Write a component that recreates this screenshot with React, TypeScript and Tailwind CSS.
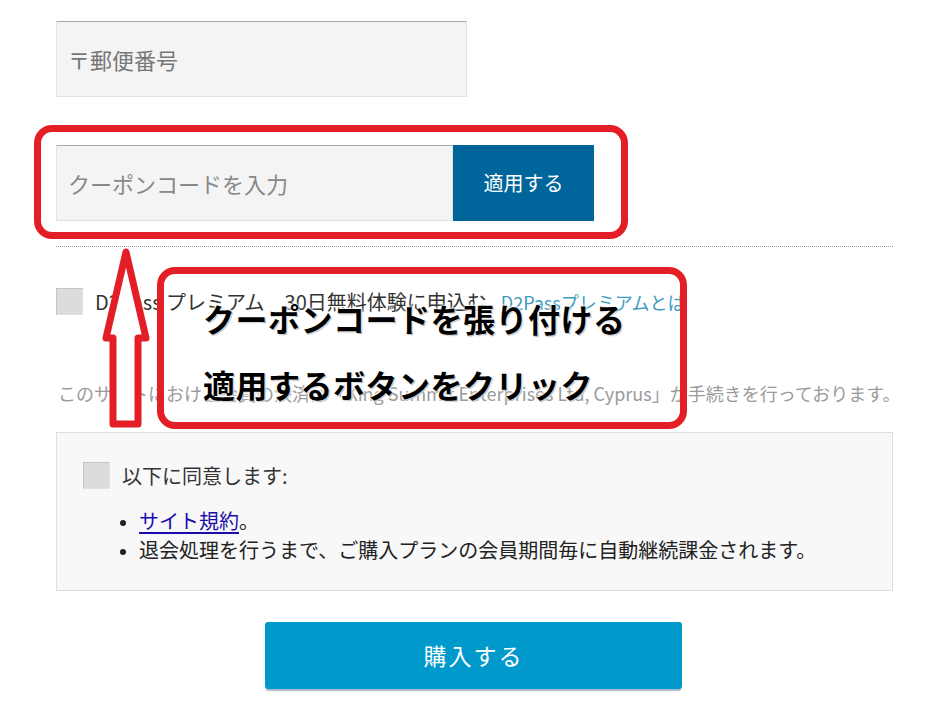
import React from 'react';

const Checkbox: React.FC = () => (
  <span className="inline-block w-[27px] h-[27px] shrink-0 bg-[#dcdcdc] border border-[#c4c4c4] border-r-[#e2e2e2] border-b-[#e2e2e2]" />
);

export default function App() {
  return (
    <div className="relative w-[946px] h-[714px] overflow-hidden bg-white font-['Noto_Sans_CJK_JP',sans-serif]">
      {/* Form */}
      <div className="ml-[56px] w-[837px] pt-[21px]">
        {/* Zip */}
        <div className="w-[411px] h-[76px] flex items-center px-[11px] bg-[#f4f4f4] border border-[#e2e2e2] border-t-[#a8a8a8]">
          <span className="text-[22px] leading-none text-[#777]">〒郵便番号</span>
        </div>

        {/* Coupon */}
        <div className="mt-[48px] flex h-[76px] w-[538px]">
          <div className="flex-1 flex items-center px-[11px] bg-[#f4f4f4] border border-[#e2e2e2] border-t-[#a8a8a8]">
            <span className="text-[22px] leading-none text-[#888]">クーポンコードを入力</span>
          </div>
          <button className="w-[141px] h-full bg-[#00659a] text-white text-[20px] leading-none">適用する</button>
        </div>

        <div className="mt-[25px] border-t border-dotted border-[#9a9a9a]" />

        {/* Premium trial */}
        <div className="mt-[41px] flex items-center gap-[12px]">
          <Checkbox />
          <span className="text-[20px] leading-none text-[#333] whitespace-nowrap">
            D2Pass プレミアム　30日無料体験に申込む
            <a className="ml-[14px] text-[18px] text-[#3a9cc0]">D2Passプレミアムとは</a>
          </span>
        </div>

        <p className="mt-[66px] ml-[2px] text-[18px] leading-[24px] text-[#9a9a9a] whitespace-nowrap">
          このサイトにおける会員の決済は「King Summit Enterprises Ltd, Cyprus」が手続きを行っております。
        </p>

        {/* Agreement */}
        <div className="mt-[27px] h-[159px] bg-[#f8f8f8] border border-[#dedede] pl-[26px] pt-[29px]">
          <div className="flex items-center gap-[12px]">
            <Checkbox />
            <span className="text-[20px] leading-none text-[#333]">以下に同意します:</span>
          </div>
          <ul className="mt-[17px] pl-[56px] list-disc text-[20px] leading-[29px] text-[#222] marker:text-[16px]">
            <li>
              <a className="text-[#1a0dab] underline underline-offset-[3px]">サイト規約</a>。
            </li>
            <li className="whitespace-nowrap">退会処理を行うまで、ご購入プランの会員期間毎に自動継続課金されます。</li>
          </ul>
        </div>

        {/* Purchase */}
        <div className="mt-[31px] flex justify-center">
          <button className="w-[417px] h-[67px] ml-[-2px] rounded-[3px] bg-[#0099cb] text-white text-[23px] tracking-[2px] leading-none shadow-[0_3px_1px_-1px_rgba(0,60,90,0.35)]">
            購入する
          </button>
        </div>
      </div>

      {/* Annotations */}
      <div className="absolute left-[34px] top-[125px] w-[594px] h-[114px] rounded-[18px] border-[7px] border-[#e41e26]" />

      <svg className="absolute left-0 top-0" width="946" height="714" viewBox="0 0 946 714">
        <path
          d="M126 252 L106 338 L113 338 L113 424 L138 424 L138 338 L146 338 Z"
          fill="#fff"
          stroke="#e41e26"
          strokeWidth="7"
          strokeLinejoin="round"
        />
      </svg>

      <div className="absolute left-[157px] top-[267px] w-[530px] h-[162px] rounded-[18px] border-[7px] border-[#e41e26] pl-[39px] pt-[11px]">
        <div className="text-[32px] font-bold leading-[66px] text-black whitespace-nowrap tracking-[0.5px] [text-shadow:0_0_3px_#fff,0_0_3px_#fff,0_0_4px_#fff,1px_1px_1px_#555]">
          <div>クーポンコードを張り付ける</div>
          <div>適用するボタンをクリック</div>
        </div>
      </div>
    </div>
  );
}
